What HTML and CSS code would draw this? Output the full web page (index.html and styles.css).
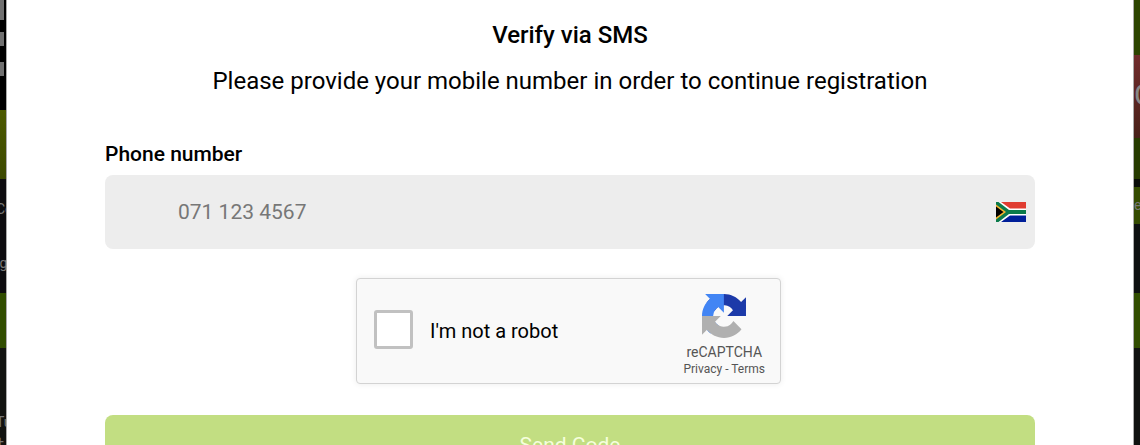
FILE: index.html
```html
<!DOCTYPE html>
<html lang="en">
<head>
<meta charset="utf-8">
<meta name="viewport" content="width=device-width, initial-scale=1">
<title>Verify via SMS</title>
<link rel="stylesheet" href="styles.css">
</head>
<body>
<div class="page">
  <div class="backdrop left" aria-hidden="true">
    <div class="tiles"><i class="tile-tall"></i><i></i><i></i></div>
    <div class="olive"></div>
    <div class="links"><span>Co</span><span>ig</span></div>
    <div class="green"></div>
    <div class="foot"><span>Tu</span><span>+</span></div>
  </div>
  <main class="modal">
    <h1 class="title">Verify via SMS</h1>
    <p class="subtitle">Please provide your mobile number in order to continue registration</p>
    <form class="form">
      <label class="label" for="phone">Phone number</label>
      <div class="field">
        <input class="input" id="phone" type="tel" placeholder="071 123 4567">
        <svg class="flag" viewBox="0 0 30 20" role="img" aria-label="South Africa">
          <path fill="#e03c31" d="M0 0h30v10H0z"/>
          <path fill="#001f99" d="M0 10h30v10H0z"/>
          <path fill="#fff" d="M0 0h5l9 6.500h16v7H14L5 20H0z"/>
          <path fill="#0b7a4b" d="M0 0h2.500L13 8h17v4H13L2.500 20H0z"/>
          <path fill="#f5b52e" d="M0 2.500 10 10 0 17.500z"/>
          <path fill="#000" d="M0 4.500 7.500 10 0 15.500z"/>
        </svg>
      </div>
      <div class="captcha-wrap">
        <div class="captcha">
          <input class="check" id="robot" type="checkbox">
          <label class="robot" for="robot">I'm not a robot</label>
          <div class="brand">
            <svg class="logo" viewBox="0 0 64 64" aria-hidden="true">
              <path fill="#1c3aa9" d="M64 31.955l-.037-1.380V4.640l-7.170 7.170C50.925 4.628 42.014.040 32.033.040c-10.387 0-19.615 4.966-25.448 12.655l11.752 11.876a15.570 15.570 0 0 1 4.760-5.344c2.050-1.600 4.952-2.906 8.968-2.906.485 0 .860.057 1.135.163 4.976.393 9.288 3.140 11.828 7.124l-8.320 8.320L64 31.955"/>
              <path fill="#4285f4" d="M31.862.094c-.463.001-.920.014-1.375.037H4.553l7.170 7.170C4.540 13.170 0 22.080 0 32.060c0 10.387 4.966 19.615 12.655 25.448L24.484 45.750a15.570 15.570 0 0 1-5.344-4.760c-1.600-2.050-2.906-4.952-2.906-8.968 0-.485.057-.860.163-1.135.393-4.976 3.140-9.288 7.124-11.828l8.320 8.320V.094"/>
              <path fill="#b0b0b0" d="M0 32.018c.001.463.014.921.037 1.378V59.330l7.170-7.170C13.075 59.343 21.986 63.930 31.966 63.930c10.387 0 19.615-4.966 25.448-12.655L45.662 39.399a15.570 15.570 0 0 1-4.760 5.344c-2.050 1.600-4.952 2.906-8.968 2.906-.485 0-.860-.057-1.135-.163-4.976-.393-9.288-3.140-11.828-7.124l8.320-8.320L0 32.018"/>
            </svg>
            <span class="brand-name">reCAPTCHA</span>
            <span class="legal"><a href="#privacy">Privacy</a> - <a href="#terms">Terms</a></span>
          </div>
        </div>
      </div>
      <button class="send" type="submit">Send Code</button>
    </form>
  </main>
  <div class="backdrop right" aria-hidden="true">
    <div class="moss"></div>
    <div class="promo">C</div>
    <div class="moss-low"></div>
    <div class="menu">e</div>
    <div class="gap"></div>
    <div class="green"></div>
  </div>
</div>
</body>
</html>
```

FILE: styles.css
```css
* { box-sizing: border-box; }

body {
  margin: 0;
  height: 100vh;
  overflow: hidden;
  background: #101210;
  color: #000;
  font-family: Roboto, "Open Sans", sans-serif;
}

.page {
  display: grid;
  grid-template-columns: 6px 1fr 6px;
  height: 100%;
}

.backdrop {
  display: flex;
  flex-direction: column;
  overflow: hidden;
  color: #777;
  font-size: 14px;
  line-height: 20px;
}

.backdrop > div { flex: none; overflow: hidden; }

.tiles {
  display: flex;
  flex-direction: column;
  gap: 16px;
  height: 110px;
  background: #000;
}
.tiles i { width: 4px; height: 14px; background: #707070; }
.tiles .tile-tall { height: 20px; margin-bottom: -4px; }
.olive { height: 69px; background: linear-gradient(#4c5900, #3c4900); }
.links { display: flex; flex-direction: column; gap: 34px; height: 114px; padding-top: 20px; background: #0d0c0f; }
.links span, .foot span { margin-left: -4px; }
.green { height: 55px; background: #314d00; }
.foot { display: flex; flex-direction: column; padding-top: 64px; background: #121310; }

.moss { height: 55px; background: #2c4400; }
.promo { height: 83px; padding-top: 30px; background: linear-gradient(#702c2c, #482018); color: #888; font-size: 30px; }
.moss-low { height: 41px; background: #263b00; }
.menu { height: 45px; padding-top: 8px; border-top: 8px solid #080b08; background: #344b00; }
.gap { height: 69px; background: #0d1010; }

.modal {
  min-width: 0;
  padding: 20px 98px 0;
  overflow: hidden;
  border: solid #aaa;
  border-width: 0 1px;
  background: #fff;
}

.title {
  margin: 0;
  font-size: 24px;
  font-weight: 500;
  line-height: 30px;
  text-align: center;
}

.subtitle {
  margin: 16px 0 0;
  font-size: 24px;
  line-height: 30px;
  text-align: center;
}

.form { margin-top: 44px; }

.label {
  display: block;
  font-size: 21px;
  font-weight: 500;
  line-height: 28px;
}

.field {
  display: flex;
  align-items: center;
  margin-top: 7px;
  padding-right: 9px;
  border-radius: 8px;
  background: #ededed;
}

.input {
  flex: 1;
  min-width: 0;
  height: 74px;
  padding: 0 20px 0 73px;
  border: 0;
  background: transparent;
  color: #000;
  font: 21px/28px Roboto, "Open Sans", sans-serif;
}
.input::placeholder { color: #777; opacity: 1; }

.flag { width: 30px; height: 20px; }

.captcha-wrap { width: 428px; margin: 29px auto 0; }

.captcha {
  display: flex;
  align-items: center;
  width: 425px;
  height: 106px;
  padding: 0 15px 0 17px;
  border: 1px solid #d3d3d3;
  border-radius: 4px;
  background: #f9f9f9;
  box-shadow: 0 0 6px rgba(0, 0, 0, .08);
}

.check {
  appearance: none;
  width: 39px;
  height: 39px;
  margin: 0 0 4px;
  border: 3px solid #c1c1c1;
  border-radius: 3px;
  background: #fff;
}
.check:checked { background: #4285f4; }

.robot { margin-left: 17px; font-size: 20px; line-height: 24px; }

.brand {
  display: flex;
  flex-direction: column;
  align-items: center;
  margin-left: auto;
  padding-top: 8px;
  color: #555;
}
.logo { width: 44px; height: 44px; }
.brand-name { margin-top: 5px; font-size: 14px; line-height: 18px; }
.legal { font-size: 12px; line-height: 16px; }
.legal a { color: inherit; text-decoration: none; }

.send {
  display: block;
  width: 100%;
  height: 60px;
  margin-top: 31px;
  border: 0;
  border-radius: 8px;
  background: #c2de82;
  color: #f5ffdc;
  font: 21px/28px Roboto, "Open Sans", sans-serif;
}
```
